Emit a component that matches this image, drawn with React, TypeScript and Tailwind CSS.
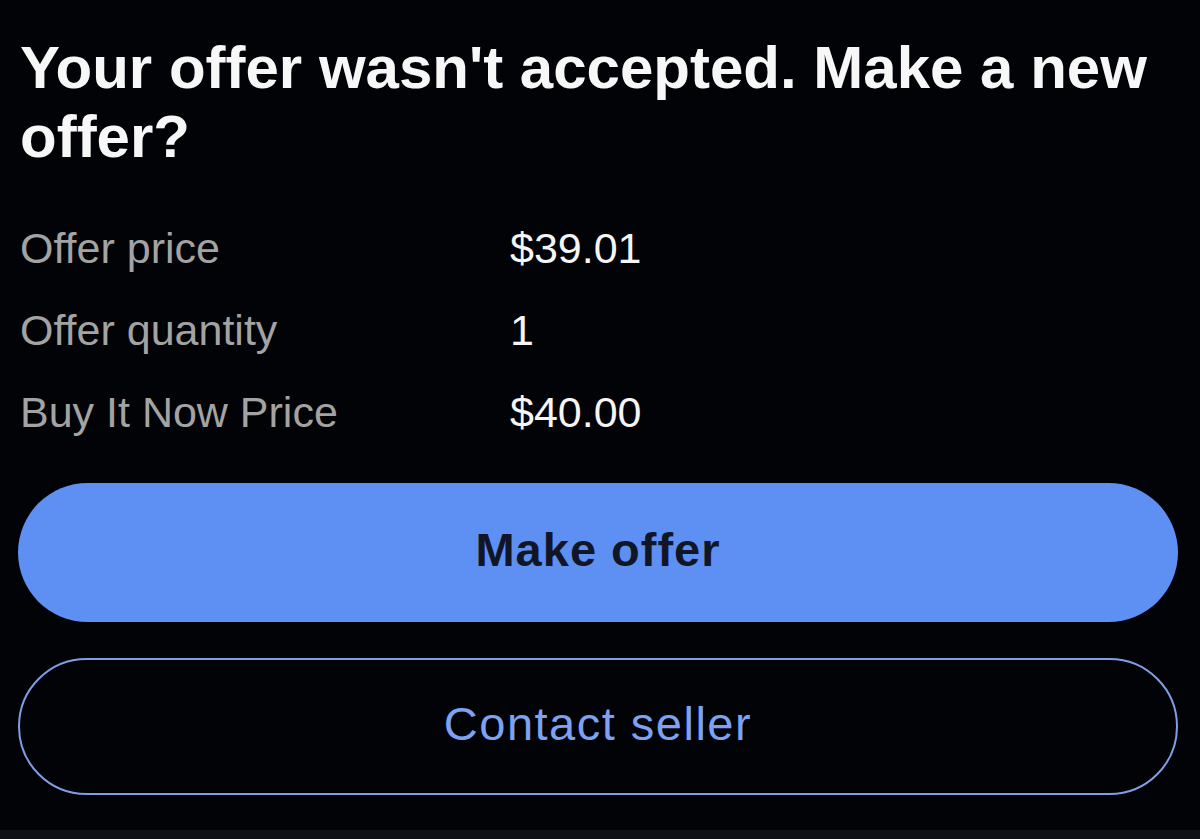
const rows = [
  { label: 'Offer price', value: '$39.01' },
  { label: 'Offer quantity', value: '1' },
  { label: 'Buy It Now Price', value: '$40.00' },
];

function OfferRow({ label, value }: { label: string; value: string }) {
  return (
    <div className="flex h-[82px] items-center text-[43px] leading-[82px]">
      <span className="w-[490px] text-[#a3a3a3]">{label}</span>
      <span className="text-[#f5f5f5]">{value}</span>
    </div>
  );
}

export default function App() {
  return (
    <div
      className="flex h-[839px] w-full flex-col bg-[#020307] text-white"
      style={{ fontFamily: '"Liberation Sans", Arial, sans-serif' }}
    >
      <h1 className="pl-5 pr-2 pt-[33px] text-[60px] font-bold leading-[69px] text-[#f7f7f7]">
        Your offer wasn't accepted. Make a new offer?
      </h1>

      <div className="mt-[36px] pl-5">
        {rows.map((r) => (
          <OfferRow key={r.label} label={r.label} value={r.value} />
        ))}
      </div>

      <div className="ml-[18px] mr-[22px] mt-[30px] flex flex-col gap-[36px]">
        <button
          type="button"
          className="flex h-[139px] items-center justify-center rounded-full bg-[#5e8ff2] pb-1 text-[47px] font-bold tracking-[1px] text-[#111626]"
        >
          Make offer
        </button>
        <button
          type="button"
          className="flex h-[137px] items-center justify-center rounded-full border-2 border-[#7f9ee6] pb-1 text-[47px] tracking-[1.5px] text-[#7da2f1]"
        >
          Contact seller
        </button>
      </div>

      <div className="flex-1" />
      <div className="h-[9px] bg-[#0e1016]" />
    </div>
  );
}
